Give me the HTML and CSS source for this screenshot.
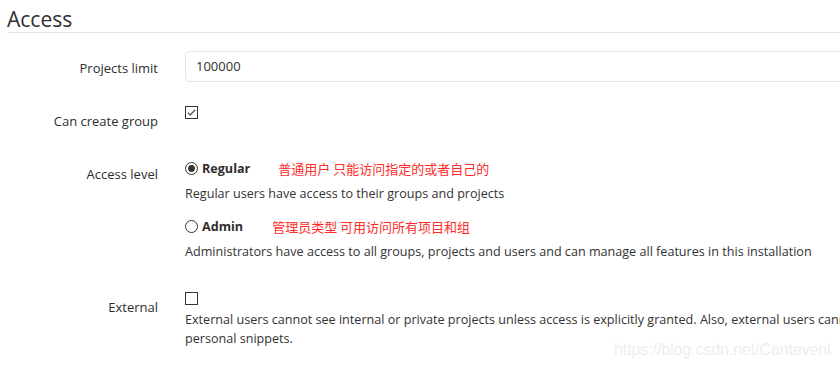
FILE: index.html
```html
<!DOCTYPE html>
<html>
<head>
<meta charset="utf-8">
<link rel="stylesheet" href="styles.css">
</head>
<body>
<div class="page">
  <h3 class="title">Access</h3>
  <div class="form">
    <div class="row row-limit">
      <label class="label">Projects limit</label>
      <div class="control"><div class="input">100000</div></div>
    </div>
    <div class="row row-group">
      <label class="label label-check">Can create group</label>
      <div class="control">
        <div class="line">
          <svg class="box" width="13" height="13" viewBox="0 0 13 13"><rect x="0.5" y="0.5" width="12" height="12" fill="#fff" stroke="#333"/><path d="M2.8 6.6 L5.2 9 L10.2 3.8" fill="none" stroke="#555" stroke-width="1.3"/></svg>
        </div>
      </div>
    </div>
    <div class="row row-level">
      <label class="label label-radio">Access level</label>
      <div class="control">
        <div class="line">
          <svg class="box" width="13" height="13" viewBox="0 0 13 13"><circle cx="6.5" cy="6.5" r="6" fill="#fff" stroke="#333"/><circle cx="6.5" cy="6.5" r="3.4" fill="#333"/></svg>
          <span class="opt">Regular</span><span class="note">普通用户 只能访问指定的或者自己的</span>
        </div>
        <p class="help help-first">Regular users have access to their groups and projects</p>
        <div class="line line-admin">
          <svg class="box" width="13" height="13" viewBox="0 0 13 13"><circle cx="6.5" cy="6.5" r="6" fill="#fff" stroke="#333"/></svg>
          <span class="opt">Admin</span><span class="note note-admin">管理员类型 可用访问所有项目和组</span>
        </div>
        <p class="help help-first">Administrators have access to all groups, projects and users and can manage all features in this installation</p>
      </div>
    </div>
    <div class="row row-external">
      <label class="label label-check">External</label>
      <div class="control">
        <div class="line">
          <svg class="box" width="13" height="13" viewBox="0 0 13 13"><rect x="0.5" y="0.5" width="12" height="12" fill="#fff" stroke="#333"/></svg>
        </div>
        <p class="help help-ext">External users cannot see internal or private projects unless access is explicitly granted. Also, external users cannot create projects, groups, or personal snippets.</p>
      </div>
    </div>
  </div>
  <div class="watermark">https://blog.csdn.net/Cantevenl</div>
</div>
</body>
</html>
```
FILE: styles.css
```css
html, body {
  margin: 0;
  padding: 0;
  background: #fff;
  overflow: hidden;
}
body {
  width: 840px;
  height: 370px;
  font-family: "Open Sans", "Noto Sans CJK SC", sans-serif;
  font-size: 13px;
  color: #2e2e2e;
}
.page {
  position: relative;
  height: 370px;
  padding-left: 7px;
}
.title {
  margin: 0;
  padding-top: 5px;
  height: 27px;
  font-size: 21px;
  font-weight: 400;
  line-height: 28px;
  color: #2e2e2e;
  border-bottom: 1px solid #e5e5e5;
  width: 1000px;
}
.form {
  width: 1050px;
}
.row {
  display: grid;
  grid-template-columns: 151px 1fr;
  column-gap: 27px;
  align-items: start;
}
.row-limit { margin-top: 18px; }
.row-group { margin-top: 20px; }
.row-level { margin-top: 27px; }
.row-external { margin-top: 27px; }
.label {
  text-align: right;
  line-height: 20px;
  padding-top: 7px;
}
.label-check { padding-top: 9px; }
.label-radio { padding-top: 6px; }
.input {
  height: 29px;
  border: 1px solid #e5e5e5;
  border-radius: 4px;
  padding-left: 10px;
  line-height: 29px;
  color: #2e2e2e;
}
.line {
  display: flex;
  align-items: center;
  height: 20px;
}
.line-admin { margin-top: 13px; }
.box { flex: none; }
.opt {
  font-weight: 700;
  font-size: 12.6px;
  margin-left: 4px;
}
.note {
  color: #ff2b2b;
  margin-left: 28px;
  font-family: "Noto Sans CJK SC", sans-serif;
}
.note-admin { margin-left: 29px; }
.help {
  margin: 0;
  font-size: 12.6px;
  line-height: 19px;
  color: #333;
}
.help-first { margin-top: 6px; }
.help-ext { margin-top: 2px; }
.watermark {
  position: absolute;
  left: 614px;
  top: 341px;
  font-family: "Liberation Sans", sans-serif;
  font-size: 16px;
  letter-spacing: -0.1px;
  color: #eeeeee;
  white-space: nowrap;
}
```
